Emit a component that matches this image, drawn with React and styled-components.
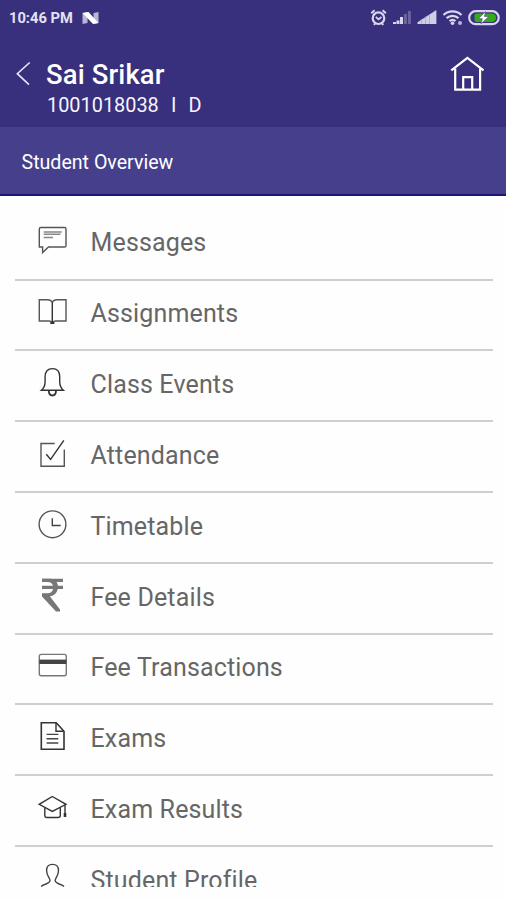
import React from 'react';
import styled, { createGlobalStyle } from 'styled-components';

const GlobalStyle = createGlobalStyle`
  * {
    box-sizing: border-box;
  }
  body {
    margin: 0;
    background: #fefefe;
    font-family: Roboto, "Liberation Sans", sans-serif;
  }
`;

const Screen = styled.div`
  width: 506px;
  height: 900px;
  overflow: hidden;
  display: flex;
  flex-direction: column;
  background: #fefefe;
`;

const Top = styled.header`
  height: 127px;
  flex: none;
  background: #382f7d;
  color: #fff;
`;

const StatusBar = styled.div`
  height: 36px;
  display: flex;
  justify-content: space-between;
  padding: 0 5px 0 9px;
`;

const Clock = styled.div`
  display: flex;
  align-items: center;
  gap: 9px;
  font-size: 14.7px;
  font-weight: 700;
  line-height: 36px;
  color: #e4e2f4;
`;

const TitleBar = styled.div`
  display: flex;
  padding: 20px 20px 0 15px;
`;

const Back = styled.svg`
  flex: none;
  width: 31px;
  height: 36px;
`;

const Names = styled.div`
  flex: 1;
`;

const Name = styled.h1`
  margin: 0;
  font-size: 27.4px;
  font-weight: 500;
  line-height: 38px;
  letter-spacing: 0.15px;
`;

const Info = styled.div`
  display: flex;
  padding-left: 1px;
  gap: 12.2px;
  font-size: 19.9px;
  line-height: 24px;
  color: #f6f5fc;
`;

const Section = styled.div`
  flex: none;
  height: 69px;
  padding-left: 21.5px;
  border-bottom: 2px solid #1f1478;
  background: #463f8c;
  color: #fff;
  font-size: 19.6px;
  line-height: 72px;
`;

const Menu = styled.ul`
  list-style: none;
  margin: 0;
  padding: 13.7px 13.5px 0 14.5px;
  height: 690.5px;
  overflow: hidden;
`;

const Item = styled.li`
  height: 70.83px;
  display: flex;
  align-items: flex-start;
  padding: 11.7px 0 0 19.5px;
  border-bottom: 2px solid #cfcfcf;
`;

const ItemIcon = styled.svg`
  flex: none;
  width: 36px;
  height: 40px;
  fill: none;
  stroke: #555;
  stroke-width: 1.4;
`;

const Label = styled.span`
  margin-left: 20.5px;
  font-size: 25px;
  line-height: 43.6px;
  letter-spacing: 0.15px;
  color: #666;
`;

const icons = {
  messages: (
    <>
      <path d="M7 6.5H30.5Q32 6.5 32 8V24.7Q32 26 30.5 26H14.5L8.6 31.6V26H5.3V8Q5.3 6.5 7 6.5Z" />
      <path d="M9.7 11H27.7M9.7 13.2H26.5M9.7 16.5H19" stroke="#888" />
    </>
  ),
  book: (
    <>
      <path d="M18.3 10Q16.5 7.8 13.5 7.8H5.3V29H15Q17 29 18.3 30.5Q19.6 29 21.6 29H32V7.8H23Q20 7.8 18.3 10Z" />
      <path d="M18.3 10V31" stroke="#333" />
      <path d="M16.3 31H20.4" stroke="#333" strokeWidth="2" />
    </>
  ),
  bell: (
    <>
      <path d="M7.4 27.3C10 25.2 11 23.5 11.1 19V13.5C11.1 8.5 13.7 5.6 18.4 5.6S25.7 8.5 25.7 13.5V19C25.8 23.5 27 25.2 29.4 27.3Z" stroke="#333" />
      <path d="M14.8 27.5C14.8 30.7 16.2 32.5 18.4 32.5S22 30.7 22 27.5" stroke="#333" strokeWidth="1.8" />
    </>
  ),
  check: (
    <>
      <path d="M20.7 9.5H7V32.2H30.3V15.5" />
      <path d="M12.3 20.3L16.6 25.4L29.8 6.3" stroke="#333" />
    </>
  ),
  clock: (
    <>
      <circle cx="18.5" cy="19.3" r="13.4" />
      <path d="M18.3 13.3V20.5H26.7" stroke="#444" />
    </>
  ),
  rupee: (
    <>
      <path d="M8 4.4H29M8 11.4H29" stroke="#777" strokeWidth="3.2" />
      <path d="M8 2.8H16C27 2.8 26.5 19.5 15.8 20.3L26 33.5V35.6H22L8 20.6V17.2H14C21 17.2 21 6 14 6H8Z" fill="#777" stroke="none" />
    </>
  ),
  card: (
    <>
      <rect x="5.3" y="8.4" width="27" height="21.3" rx="2" stroke="#777" />
      <path d="M5.3 15.8H32.3" stroke="#444" strokeWidth="4.4" />
    </>
  ),
  doc: (
    <>
      <path d="M7.3 5.7H22.2L30 14.2V32.3H7.3Z" stroke="#333" strokeWidth="1.6" />
      <path d="M22 5.7V14.2H30" stroke="#333" />
      <path d="M12.6 17.4H24.3M12.6 21.7H24.3M12.6 26H24.3" stroke="#444" />
    </>
  ),
  cap: (
    <>
      <path d="M18.3 8.5L32 16.3L18.3 23.4L5.2 16.3Z" stroke="#333" />
      <path d="M10.8 19.5V27.8Q11 29.5 13 29.5H24Q26.3 29.5 26.3 27.8V19.5M31 17V27" stroke="#333" />
      <path d="M31 25V29" stroke="#333" strokeWidth="2.6" />
    </>
  ),
  person: (
    <path d="M7.2 27.5C9 25 16 25 16 21.5C16 19 12.6 17 12.6 11.5C12.6 7.3 15 5.4 18.5 5.4S24.5 7.3 24.5 11.5C24.5 17 21.2 19 21.2 21.5C21.2 25 28 25 30 27.5" stroke="#444" />
  ),
};

const items = [
  { icon: 'messages', label: 'Messages' },
  { icon: 'book', label: 'Assignments' },
  { icon: 'bell', label: 'Class Events' },
  { icon: 'check', label: 'Attendance' },
  { icon: 'clock', label: 'Timetable' },
  { icon: 'rupee', label: 'Fee Details' },
  { icon: 'card', label: 'Fee Transactions' },
  { icon: 'doc', label: 'Exams' },
  { icon: 'cap', label: 'Exam Results' },
  { icon: 'person', label: 'Student Profile' },
];

function NougatIcon() {
  return (
    <svg width="17" height="14" viewBox="0 0 17 14">
      <path d="M0.5 2L5.5 1V12L0.5 13Z" fill="#b9b5da" />
      <path d="M11.5 2L16.5 1V12L11.5 13Z" fill="#b9b5da" />
      <path d="M0.5 2L6.5 1L16.5 12L11 13Z" fill="#fff" />
    </svg>
  );
}

function StatusIcons() {
  return (
    <svg width="132" height="36" viewBox="0 0 132 36" fill="none" stroke="#d9d6ee">
      <circle cx="9.5" cy="18.2" r="5.8" strokeWidth="2.2" />
      <path d="M2.3 13.2L5.6 10.3M16.9 13.2L13.6 10.3M4.9 24.8L6.2 23.3M14.3 24.8L13 23.3" strokeWidth="2" />
      <path d="M6.8 17L9.6 19.3L12.4 17" strokeWidth="1.7" />
      <path d="M25.5 24V22M29 24V20.5M32.5 24V17" strokeWidth="3" />
      <path d="M36.4 24V14M40.4 24V11" stroke="#6b649f" strokeWidth="3" />
      <path d="M48.5 24V22.3L67.4 10V24Z" fill="#d0cde7" stroke="none" />
      <path d="M52.5 24V19M56.5 24V16.5M60.5 24V14" stroke="#a5a0c9" strokeWidth="0.7" />
      <path d="M74.5 15C79.5 10.2 87.5 10.2 92.5 15M77.6 18.2C81 15 86 15 89.4 18.2M80.6 21.2C82.5 19.5 84.5 19.5 86.4 21.2" strokeWidth="2.3" />
      <circle cx="83.5" cy="23.2" r="1.8" fill="#d9d6ee" stroke="none" />
      <circle cx="91" cy="23" r="2" fill="#b9b5da" stroke="none" />
      <rect x="100.2" y="11.2" width="29.5" height="13" rx="6.5" strokeWidth="2.2" />
      <path d="M107.5 13.5H122Q127 13.5 127 17.7T122 22H107.5Q105.5 22 105.5 20V15.5Q105.5 13.5 107.5 13.5Z" fill="#35ad12" stroke="none" />
      <path d="M116.5 11.5L109.5 18.7H113.4L111.9 24L119.8 16.5H115.4Z" fill="#fff" stroke="#382f7d" strokeWidth="0.5" />
    </svg>
  );
}

function HomeIcon() {
  return (
    <svg width="36" height="36" viewBox="0 0 36 36" fill="none" stroke="#fff" strokeWidth="2.2">
      <path d="M1.3 14.4L17.4 2L33.5 14.4" />
      <path d="M5.2 12.5V33.6H30.1V12.5M13.2 33.6V21.2H22.2V33.6" />
    </svg>
  );
}

function App() {
  return (
    <Screen>
      <GlobalStyle />
      <Top>
        <StatusBar>
          <Clock>
            10:46 PM
            <NougatIcon />
          </Clock>
          <StatusIcons />
        </StatusBar>
        <TitleBar>
          <Back viewBox="0 0 31 36" fill="none" stroke="#e8e6f6" strokeWidth="1.6">
            <path d="M14.7 6.5L2.3 17.7L14 28.7" />
          </Back>
          <Names>
            <Name>Sai Srikar</Name>
            <Info>
              <span>1001018038</span>
              <span>I</span>
              <span>D</span>
            </Info>
          </Names>
          <HomeIcon />
        </TitleBar>
      </Top>
      <Section>Student Overview</Section>
      <Menu>
        {items.map(item => (
          <Item key={item.label}>
            <ItemIcon viewBox="0 0 36 40">{icons[item.icon]}</ItemIcon>
            <Label>{item.label}</Label>
          </Item>
        ))}
      </Menu>
    </Screen>
  );
}

export default App;
